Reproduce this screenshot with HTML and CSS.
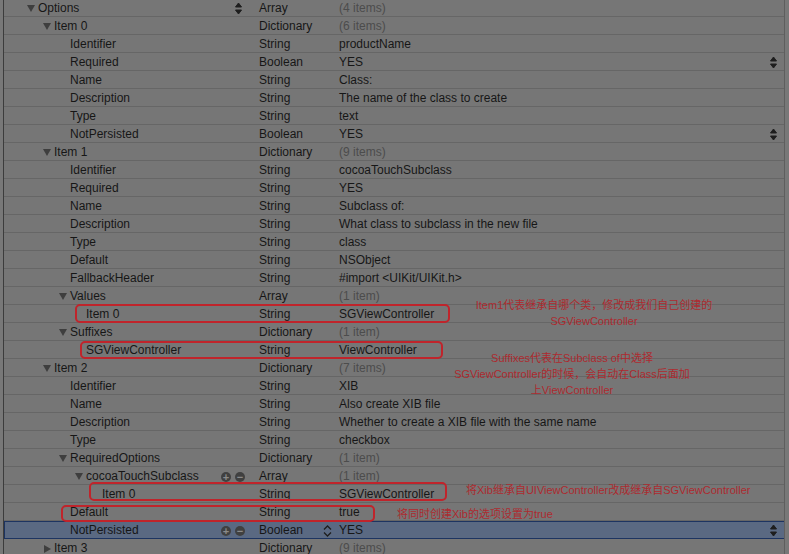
FILE: index.html
```html
<!DOCTYPE html>
<html lang="zh">
<head>
    <meta charset="UTF-8">
    <title>TemplateInfo.plist</title>
    <link rel="stylesheet" href="styles.css">
</head>
<body>
    <div class="editor">
        <div class="row"><div class="key l0"><span class="tri open"></span>Options<span class="stepper"><svg width="7" height="13" viewBox="0 0 7 13"><path d="M3.5 1 L6.5 5 H0.5 Z M3.5 12 L6.5 8 H0.5 Z"/></svg></span></div><div class="type">Array</div><div class="val muted">(4 items)</div></div>
        <div class="row"><div class="key l1"><span class="tri open"></span>Item 0</div><div class="type">Dictionary</div><div class="val muted">(6 items)</div></div>
        <div class="row"><div class="key l2"><span class="tri"></span>Identifier</div><div class="type">String</div><div class="val">productName</div></div>
        <div class="row"><div class="key l2"><span class="tri"></span>Required</div><div class="type">Boolean</div><div class="val">YES<span class="stepper"><svg width="7" height="13" viewBox="0 0 7 13"><path d="M3.5 1 L6.5 5 H0.5 Z M3.5 12 L6.5 8 H0.5 Z"/></svg></span></div></div>
        <div class="row"><div class="key l2"><span class="tri"></span>Name</div><div class="type">String</div><div class="val">Class:</div></div>
        <div class="row"><div class="key l2"><span class="tri"></span>Description</div><div class="type">String</div><div class="val">The name of the class to create</div></div>
        <div class="row"><div class="key l2"><span class="tri"></span>Type</div><div class="type">String</div><div class="val">text</div></div>
        <div class="row"><div class="key l2"><span class="tri"></span>NotPersisted</div><div class="type">Boolean</div><div class="val">YES<span class="stepper"><svg width="7" height="13" viewBox="0 0 7 13"><path d="M3.5 1 L6.5 5 H0.5 Z M3.5 12 L6.5 8 H0.5 Z"/></svg></span></div></div>
        <div class="row"><div class="key l1"><span class="tri open"></span>Item 1</div><div class="type">Dictionary</div><div class="val muted">(9 items)</div></div>
        <div class="row"><div class="key l2"><span class="tri"></span>Identifier</div><div class="type">String</div><div class="val">cocoaTouchSubclass</div></div>
        <div class="row"><div class="key l2"><span class="tri"></span>Required</div><div class="type">String</div><div class="val">YES</div></div>
        <div class="row"><div class="key l2"><span class="tri"></span>Name</div><div class="type">String</div><div class="val">Subclass of:</div></div>
        <div class="row"><div class="key l2"><span class="tri"></span>Description</div><div class="type">String</div><div class="val">What class to subclass in the new file</div></div>
        <div class="row"><div class="key l2"><span class="tri"></span>Type</div><div class="type">String</div><div class="val">class</div></div>
        <div class="row"><div class="key l2"><span class="tri"></span>Default</div><div class="type">String</div><div class="val">NSObject</div></div>
        <div class="row"><div class="key l2"><span class="tri"></span>FallbackHeader</div><div class="type">String</div><div class="val">#import &lt;UIKit/UIKit.h&gt;</div></div>
        <div class="row"><div class="key l2"><span class="tri open"></span>Values</div><div class="type">Array</div><div class="val muted">(1 item)</div></div>
        <div class="row"><div class="key l3"><span class="tri"></span>Item 0</div><div class="type">String</div><div class="val">SGViewController</div></div>
        <div class="row"><div class="key l2"><span class="tri open"></span>Suffixes</div><div class="type">Dictionary</div><div class="val muted">(1 item)</div></div>
        <div class="row"><div class="key l3"><span class="tri"></span>SGViewController</div><div class="type">String</div><div class="val">ViewController</div></div>
        <div class="row"><div class="key l1"><span class="tri open"></span>Item 2</div><div class="type">Dictionary</div><div class="val muted">(7 items)</div></div>
        <div class="row"><div class="key l2"><span class="tri"></span>Identifier</div><div class="type">String</div><div class="val">XIB</div></div>
        <div class="row"><div class="key l2"><span class="tri"></span>Name</div><div class="type">String</div><div class="val">Also create XIB file</div></div>
        <div class="row"><div class="key l2"><span class="tri"></span>Description</div><div class="type">String</div><div class="val">Whether to create a XIB file with the same name</div></div>
        <div class="row"><div class="key l2"><span class="tri"></span>Type</div><div class="type">String</div><div class="val">checkbox</div></div>
        <div class="row"><div class="key l2"><span class="tri open"></span>RequiredOptions</div><div class="type">Dictionary</div><div class="val muted">(1 item)</div></div>
        <div class="row"><div class="key l3"><span class="tri open"></span>cocoaTouchSubclass<span class="btns"><span class="btn">+</span><span class="btn">&minus;</span></span></div><div class="type">Array</div><div class="val muted">(1 item)</div></div>
        <div class="row"><div class="key l4"><span class="tri"></span>Item 0</div><div class="type">String</div><div class="val">SGViewController</div></div>
        <div class="row"><div class="key l2"><span class="tri"></span>Default</div><div class="type">String</div><div class="val">true</div></div>
        <div class="row selected"><div class="key l2"><span class="tri"></span>NotPersisted<span class="btns"><span class="btn">+</span><span class="btn">&minus;</span></span></div><div class="type">Boolean<span class="stepper"><svg width="9" height="14" viewBox="0 0 9 14"><path d="M1 5.5 L4.5 2 L8 5.5 M1 8.5 L4.5 12 L8 8.5" fill="none" stroke-width="1.3"/></svg></span></div><div class="val">YES<span class="stepper"><svg width="7" height="13" viewBox="0 0 7 13"><path d="M3.5 1 L6.5 5 H0.5 Z M3.5 12 L6.5 8 H0.5 Z"/></svg></span></div></div>
        <div class="row"><div class="key l1"><span class="tri closed"></span>Item 3</div><div class="type">Dictionary</div><div class="val muted">(9 items)</div></div>
    </div>

    <div class="mark" style="left:75px; top:304px; width:375px; height:19px;"></div>
    <div class="mark" style="left:80px; top:341px; width:363px; height:18px;"></div>
    <div class="mark" style="left:89px; top:482px; width:358px; height:19px;"></div>
    <div class="mark" style="left:61px; top:505px; width:314px; height:17px;"></div>

    <div class="note note-values">Item1代表继承自哪个类，修改成我们自己创建的<br>SGViewController</div>
    <div class="note note-suffixes">Suffixes代表在Subclass of中选择<br>SGViewController的时候，会自动在Class后面加<br>上ViewController</div>
    <div class="note note-xib">将Xib继承自UIViewController改成继承自SGViewController</div>
    <div class="note note-default">将同时创建Xib的选项设置为true</div>
</body>
</html>
```

FILE: styles.css
```css
body {
    margin: 0;
    padding: 0;
    background-color: #787878;
    font-family: "Liberation Sans", Arial, sans-serif;
    font-size: 12px;
    color: #161616;
    position: relative;
    height: 554px;
    overflow: hidden;
}

.editor {
    margin-top: -1px;
    margin-left: 3px;
    width: 780px;
    border-left: 1px solid #3c3c3c;
    border-right: 1px solid #5e5e5e;
    background-color: #767676;
}

    .row {
        display: grid;
        grid-template-columns: 255px 80px 1fr;
        height: 15px;
        padding-top: 2px;
        line-height: 15px;
        border-bottom: 1px solid #666666;
        white-space: nowrap;
    }

        .row.selected {
            background-color: #5a6982;
            box-shadow: inset 0 1px 0 #1d3461, inset 1px 0 0 #1d3461;
            border-bottom-color: #1d3461;
        }

    .key, .type, .val {
        display: flex;
        align-items: center;
    }

    .l0 { padding-left: 23px; }
    .l1 { padding-left: 39px; }
    .l2 { padding-left: 55px; }
    .l3 { padding-left: 71px; }
    .l4 { padding-left: 87px; }

    .tri {
        width: 11px;
        height: 8px;
        flex-shrink: 0;
        position: relative;
    }

        .tri.open::before {
            content: "";
            position: absolute;
            left: 0;
            top: 0;
            border-left: 4px solid transparent;
            border-right: 4px solid transparent;
            border-top: 7px solid #3e3e3e;
        }

        .tri.closed::before {
            content: "";
            position: absolute;
            left: 1px;
            top: 0;
            border-top: 4px solid transparent;
            border-bottom: 4px solid transparent;
            border-left: 7px solid #3e3e3e;
        }

    .muted {
        color: #4c4c4c;
    }

    .stepper {
        margin-left: auto;
        display: flex;
        align-items: center;
    }

        .stepper svg {
            fill: #1e1e1e;
            stroke: #1e1e1e;
        }

    .key .stepper { margin-right: 17px; }
    .type .stepper { margin-right: 7px; }
    .val .stepper { margin-right: 7px; }

    .btns {
        margin-left: auto;
        margin-right: 14px;
        display: flex;
        gap: 4px;
    }

        .btn {
            width: 10px;
            height: 10px;
            border-radius: 50%;
            background-color: #404040;
            color: #8a8a8a;
            font-size: 11px;
            font-weight: bold;
            line-height: 10px;
            text-align: center;
        }

.mark {
    position: absolute;
    border: 2px solid #c0242b;
    border-radius: 5px;
    box-sizing: border-box;
}

.note {
    position: absolute;
    font-family: "Liberation Sans", "Noto Sans CJK SC", sans-serif;
    font-size: 11px;
    line-height: 16px;
    color: #ad2a2f;
    white-space: nowrap;
}

.note-values {
    left: 454px;
    top: 297px;
    width: 280px;
    text-align: center;
}

.note-suffixes {
    left: 432px;
    top: 350px;
    width: 280px;
    text-align: center;
}

.note-xib {
    left: 466px;
    top: 482px;
}

.note-default {
    left: 397px;
    top: 506px;
}
```
